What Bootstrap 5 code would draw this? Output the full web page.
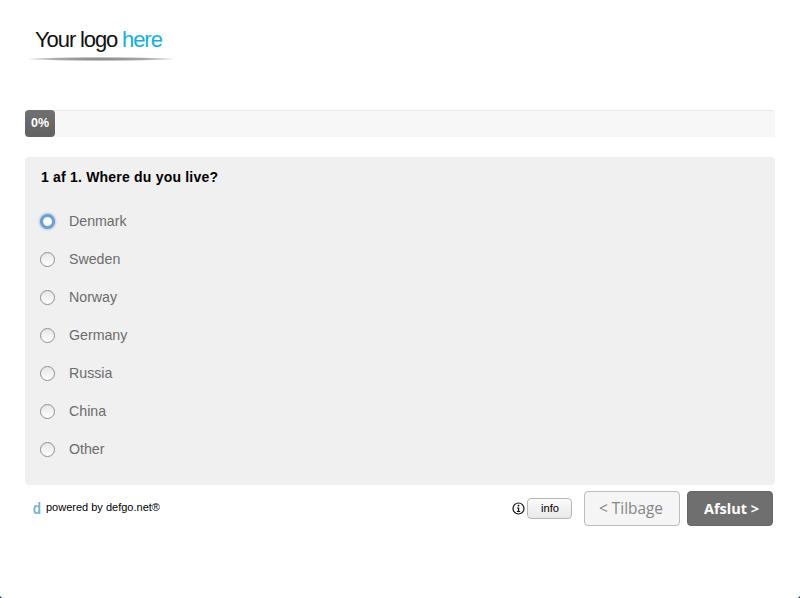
<!doctype html>
<html lang="da"><head><meta charset="utf-8"><title>Survey</title>
<link href="https://cdn.jsdelivr.net/npm/bootstrap@5.3.0/dist/css/bootstrap.min.css" rel="stylesheet">
<style>
html,body{height:100%}
body{background:#fff;font-family:"Liberation Sans",Arial,sans-serif;overflow:hidden}
.page-wrap{padding:0 25px;width:800px;height:598px}
.logo-area{height:110px;padding-top:26px}
.logo-text{font-size:22px;line-height:28px;letter-spacing:-1.05px;color:#111;padding-left:10px;word-spacing:-.4px}
.logo-text span{color:#13b0dc}
.logo-line{width:150px;height:4px;margin-top:3px;margin-left:1px;background:radial-gradient(ellipse at center,#808080 0%,#a8a8a8 45%,rgba(255,255,255,0) 72%)}
.prog-track{height:27px;background:#f7f7f7;border-top:1px solid #e6e6e6;border-radius:4px 4px 0 0;margin-bottom:20px}
.prog-fill{width:30px;height:27px;margin-top:-1px;border-radius:4px;background:linear-gradient(#707070,#616161);color:#fff;font-size:12.5px;font-weight:700;line-height:27px;text-align:center}
.q-panel{background:#f0f0f0;border-radius:4px;height:328px;padding:12px 16px}
.q-title{font-size:14px;font-weight:700;line-height:17px;color:#000;margin:0 0 16px;letter-spacing:.2px}
.opt-row{height:38px;gap:14px;color:#6c6c6c;font-size:14.2px}
.opt-row span{margin-top:2px}
.radio-dot{width:15px;height:15px;border-radius:50%;border:1px solid #8f8f8f;background:linear-gradient(#e6e6e6,#fff);flex:none;margin-top:1px;appearance:none;margin-left:-1px}
.radio-dot:checked{border:3px solid #6d9fd2;box-shadow:0 0 2px 1px #a9c7e6;background:#fdfdfd}
.foot-row{padding:6px 2px 0 7px}
.d-mark{width:8px;color:#7ab3cf;font-size:17px;font-weight:700;line-height:1;margin-right:6px;margin-top:-1px;transform:scaleX(.8)}
.powered{font-size:11px;color:#000;margin-top:-2px}
.info-glyph{flex:none;margin-right:2.5px}
.btn-info-small{width:45px;height:21px;padding:0 0 0 1px;font-size:11.2px;line-height:19px;color:#000;background:linear-gradient(#fbfbfb,#e9e9e9);border:1px solid #b5b5b5;border-radius:4px;margin-right:12px}
.btn-back,.btn-next{height:35px;font-family:"Open Sans","Noto Sans",sans-serif;line-height:33px;border-radius:4px}
.btn-back{width:96px;padding:0 2px 0 0;margin-right:7px;color:#858585;background:#f5f5f5;border:1px solid #bcbcbc;font-size:15.4px;font-weight:500}
.btn-next{width:86px;padding:0 0 0 3px;color:#fff;font-weight:700;background:#6f6f6f;border:1px solid #666;font-size:14.5px}
.corner-a,.corner-b{position:fixed;bottom:0;width:2px;height:2px;background:#1d3550}
.corner-a{left:0;clip-path:polygon(0 0,100% 100%,0 100%)}
.corner-b{right:0;clip-path:polygon(100% 0,100% 100%,0 100%)}
</style></head>
<body>
<div class="page-wrap">
  <div class="logo-area">
    <div class="logo-text">Your logo <span>here</span></div>
    <div class="logo-line"></div>
  </div>
  <div class="prog-track"><div class="prog-fill">0%</div></div>
  <section class="q-panel">
    <h1 class="q-title">1 af 1. Where du you live?</h1>
    <label class="opt-row d-flex align-items-center"><input class="radio-dot" type="radio" name="c" checked><span>Denmark</span></label>
    <label class="opt-row d-flex align-items-center"><input class="radio-dot" type="radio" name="c"><span>Sweden</span></label>
    <label class="opt-row d-flex align-items-center"><input class="radio-dot" type="radio" name="c"><span>Norway</span></label>
    <label class="opt-row d-flex align-items-center"><input class="radio-dot" type="radio" name="c"><span>Germany</span></label>
    <label class="opt-row d-flex align-items-center"><input class="radio-dot" type="radio" name="c"><span>Russia</span></label>
    <label class="opt-row d-flex align-items-center"><input class="radio-dot" type="radio" name="c"><span>China</span></label>
    <label class="opt-row d-flex align-items-center"><input class="radio-dot" type="radio" name="c"><span>Other</span></label>
  </section>
  <div class="foot-row d-flex align-items-center">
    <span class="d-mark">d</span><span class="powered">powered by defgo.net®</span>
    <div class="ms-auto d-flex align-items-center">
      <svg class="info-glyph" width="13" height="13" viewBox="0 0 13 13"><circle cx="6.5" cy="6.5" r="5.5" fill="#fff" stroke="#111" stroke-width="1.2"/><rect x="5.7" y="2.8" width="1.6" height="1.6" fill="#111"/><path d="M5 5.5h2.2v3.6H8.2v.9H4.9v-.9h1V6.4H5z" fill="#111"/></svg>
      <button class="btn btn-info-small" type="button">info</button>
      <button class="btn btn-back" type="button">&lt; Tilbage</button>
      <button class="btn btn-next" type="button">Afslut &gt;</button>
    </div>
  </div>
</div>
<div class="corner-a"></div><div class="corner-b"></div>
<script src="https://cdn.jsdelivr.net/npm/bootstrap@5.3.0/dist/js/bootstrap.bundle.min.js"></script>
</body></html>
